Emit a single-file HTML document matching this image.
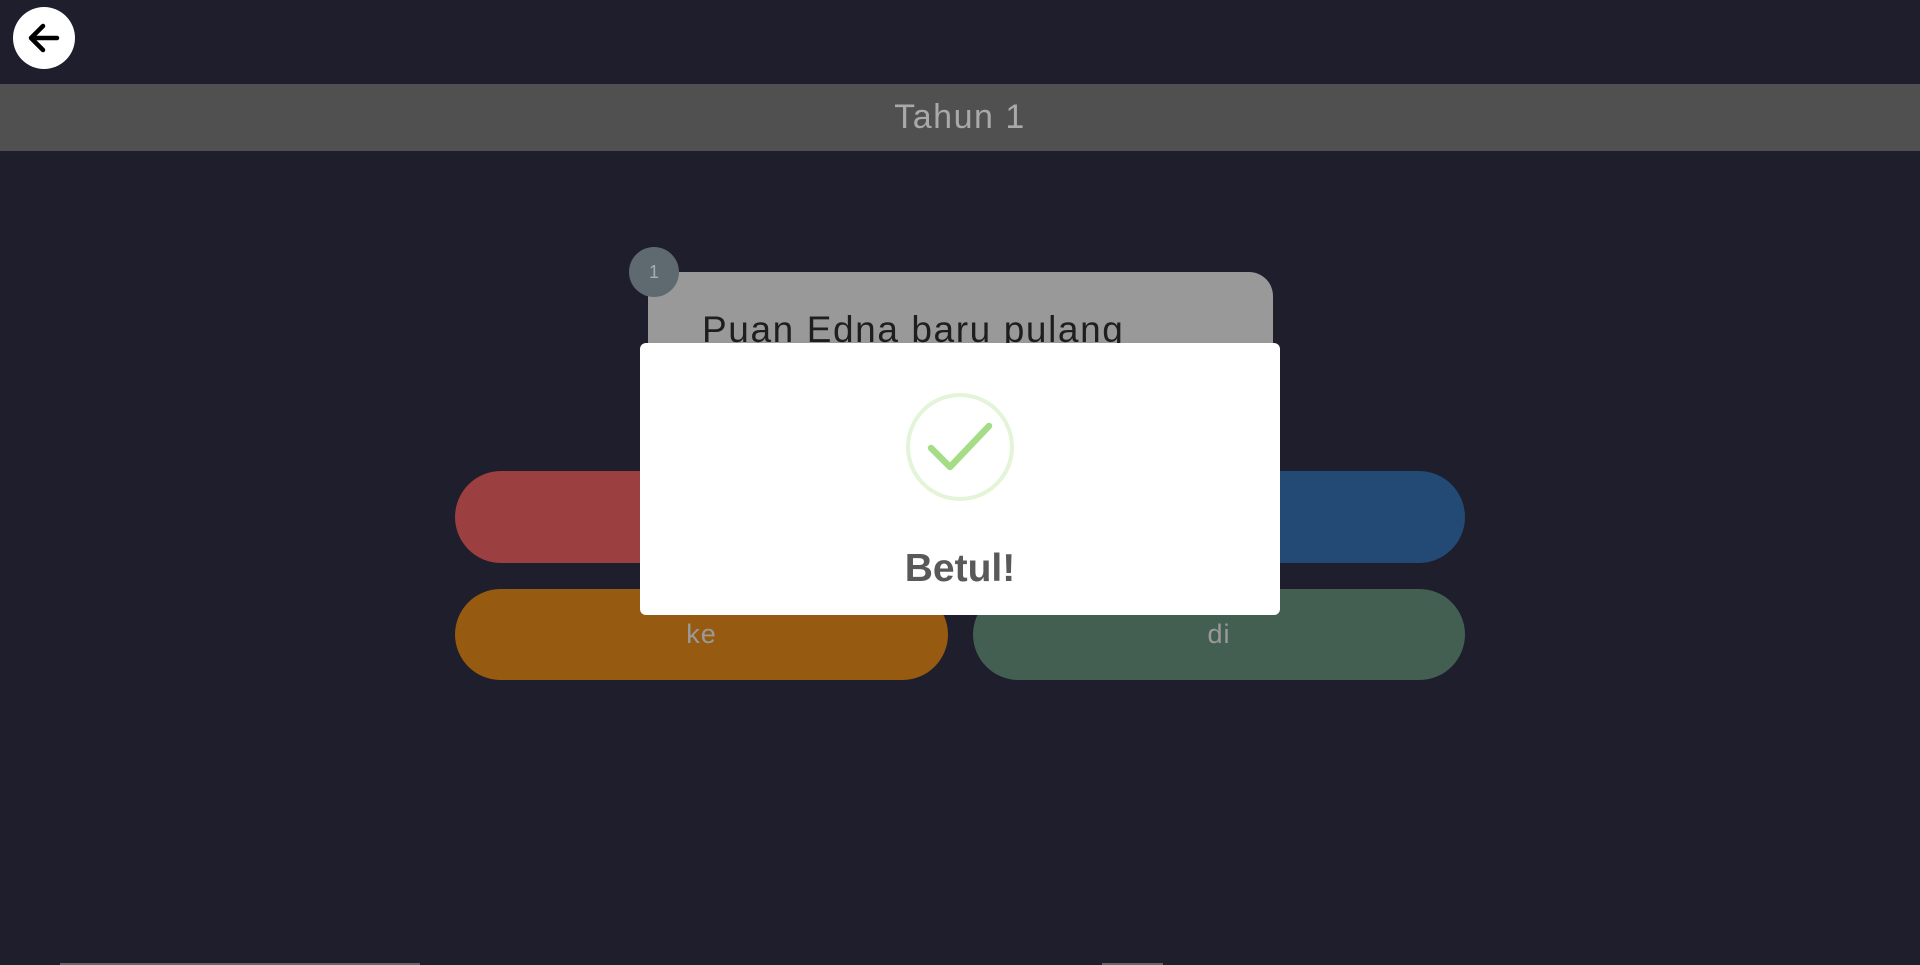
<!DOCTYPE html>
<html><head><meta charset="utf-8"><style>
*{margin:0;padding:0;box-sizing:border-box}
body{width:1920px;height:965px;background:#1e1e2d;position:relative;overflow:hidden;font-family:"Liberation Sans",sans-serif}
.abs{position:absolute}
.back{left:13px;top:7px;width:62px;height:62px;border-radius:50%;background:#fff}
.hdr{left:0;top:84px;width:1920px;height:67px;background:#505050;color:#a9a9a9;font-size:34px;text-align:center;line-height:67px;letter-spacing:1.5px}
.card{left:648px;top:272px;width:625px;height:240px;background:#999;border-radius:24px}
.qtext{left:702px;top:309px;font-size:37px;color:#1e1e1e;letter-spacing:1.6px}
.badge{left:629px;top:247px;width:50px;height:50px;border-radius:50%;background:#5f6a70;color:#aab;font-size:18px;text-align:center;line-height:50px}
.btn{border-radius:46px;color:#9a9a9a;font-size:27px;text-align:center;letter-spacing:1px}
.modal{left:640px;top:343px;width:640px;height:272px;background:#fff;border-radius:6px}
.betul{left:640px;top:547px;width:640px;text-align:center;font-weight:bold;font-size:39px;color:#595959}
</style></head><body>
<div class="abs back"><svg width="62" height="62" viewBox="0 0 62 62"><path d="M44 31H19M30 19L18 31L30 43" fill="none" stroke="#000" stroke-width="4.5" stroke-linecap="round" stroke-linejoin="round"/></svg></div>
<div class="abs hdr">Tahun 1</div>
<div class="abs card"></div>
<div class="abs qtext">Puan Edna baru pulang</div>
<div class="abs badge">1</div>
<div class="abs btn" style="left:455px;top:471px;width:493px;height:92px;background:#9c3f41"></div>
<div class="abs btn" style="left:973px;top:471px;width:492px;height:92px;background:#234a74"></div>
<div class="abs btn" style="left:455px;top:589px;width:493px;height:91px;line-height:91px;background:#965a10">ke</div>
<div class="abs btn" style="left:973px;top:589px;width:492px;height:91px;line-height:91px;background:#425f52">di</div>
<div class="abs modal"></div>
<svg class="abs" style="left:900px;top:387px" width="120" height="120" viewBox="0 0 120 120"><circle cx="60" cy="60" r="52" fill="none" stroke="#e3f4d9" stroke-width="4"/><path d="M31 61L50 80L89 39" fill="none" stroke="#a5dc86" stroke-width="6.5" stroke-linecap="round" stroke-linejoin="round"/></svg>
<div class="abs betul">Betul!</div>
<div class="abs" style="left:60px;top:963px;width:360px;height:2px;background:#666"></div>
<div class="abs" style="left:1102px;top:963px;width:61px;height:2px;background:#666"></div>
</body></html>
